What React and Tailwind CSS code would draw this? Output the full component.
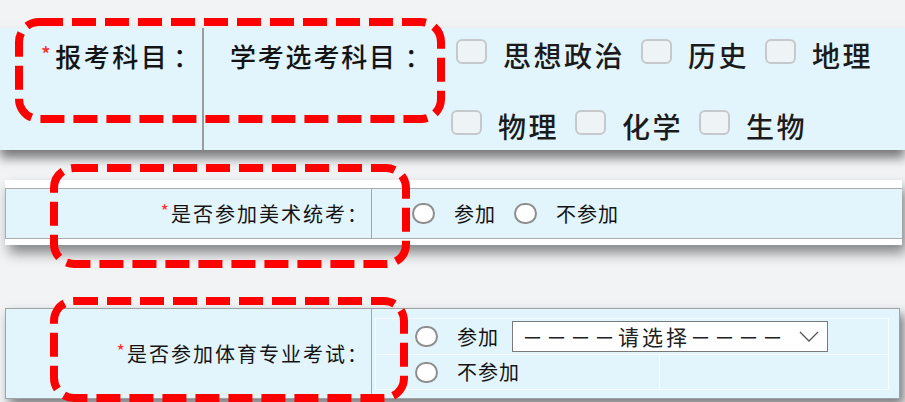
import React from "react";

const subjectsRow1 = ["思想政治", "历史", "地理"];
const subjectsRow2 = ["物理", "化学", "生物"];

function Check({ label }) {
  return (
    <span className="flex items-center">
      <span className="block w-[31px] h-[25px] rounded-[6px] border-2 border-[#c5c9cc] bg-[#eef3f6] -translate-y-[4px]" />
      <span className="ml-[16px] text-[28px] tracking-[2.5px] font-medium text-[#1b1b1b]">{label}</span>
    </span>
  );
}

function Radio({ className = "" }) {
  return <span className={"block w-[23px] h-[21px] rounded-full border-2 border-[#8e8e8e] bg-white shrink-0 " + className} />;
}

function Star({ size = "text-[18px]", top = "-top-[3px]" }) {
  return <span className={"text-[#ff3030] relative " + size + " " + top}>*</span>;
}

export default function App() {
  return (
    <div className="relative w-[905px] h-[402px] overflow-hidden bg-[#f1f3f5] text-[#141414] font-['Noto_Sans_CJK_SC','Noto_Sans',sans-serif]">
      {/* 报考科目 */}
      <div className="mt-[28px] h-[122px] flex bg-[#e3f5fc] shadow-[0_8px_10px_rgba(0,0,0,0.5)]">
        <div className="w-[204px] border-r-2 border-[#9c9c9c] pt-[9px]">
          <div className="h-[36px] flex items-center pl-[41px] text-[26px] tracking-[2.5px] font-medium whitespace-nowrap">
            <Star size="text-[20px]" top="-top-[1px]" />
            <span className="ml-[2px]">报考科目</span>
            <span className="ml-[4px]">：</span>
          </div>
        </div>
        <div className="flex-1 pt-[9px]">
          <div className="h-[36px] flex items-center">
            <span className="pl-[26px] w-[252px] text-[26px] tracking-[1.8px] font-medium whitespace-nowrap">
              学考选考科目<span className="ml-[8px]">：</span>
            </span>
            <div className="flex items-center gap-[16px]">
              {subjectsRow1.map((s) => (
                <Check key={s} label={s} />
              ))}
            </div>
          </div>
          <div className="mt-[35px] h-[36px] flex items-center gap-[16px] pl-[247px]">
            {subjectsRow2.map((s) => (
              <Check key={s} label={s} />
            ))}
          </div>
        </div>
      </div>

      {/* 美术统考 */}
      <div className="mt-[30px] ml-[5px] w-[897px] bg-white pt-[8px] pb-[6px] shadow-[4px_8px_12px_rgba(0,0,0,0.45)]">
        <div className="flex h-[51px] border-y border-l border-[#a9abad] bg-[#e3f5fc]">
          <div className="w-[366px] border-r border-[#a4a4a4] flex items-center justify-end pr-[2px] text-[20px] tracking-[2px] whitespace-nowrap">
            <Star />
            <span>是否参加美术统考：</span>
          </div>
          <div className="flex items-center pl-[40px] text-[20px] tracking-[1px]">
            <Radio />
            <span className="ml-[19px]">参加</span>
            <Radio className="ml-[18px]" />
            <span className="ml-[19px]">不参加</span>
          </div>
        </div>
      </div>

      {/* 体育专业考试 */}
      <div className="mt-[63px] ml-[5px] w-[895px] h-[91px] flex border border-[#9fa3a6] bg-[#e3f5fc] shadow-[4px_6px_10px_rgba(0,0,0,0.5)]">
        <div className="w-[366px] border-r border-[#a4a4a4] flex items-center justify-end pr-[2px] text-[20px] tracking-[2px] whitespace-nowrap">
          <Star />
          <span>是否参加体育专业考试：</span>
        </div>
        <div className="flex-1 pt-[9px] pl-[3px] pr-[10px] text-[20px] tracking-[1px]">
          <div className="border border-[#f6fcff]">
            <div className="h-[36px] flex items-center pl-[39px] border-b border-[#f6fcff]">
              <Radio />
              <span className="ml-[19px]">参加</span>
              <div className="ml-[13px] w-[316px] h-[31px] border border-[#7a7a7a] bg-white flex items-center pl-[9px] pr-[8px] overflow-hidden">
                <span className="flex-1 whitespace-nowrap text-[21px] tracking-[3px] text-[#222]">－－－－请选择－－－－</span>
                <svg className="shrink-0" width="20" height="12" viewBox="0 0 20 12" fill="none">
                  <polyline points="1,1 10,10 19,1" stroke="#555" strokeWidth="1.3" />
                </svg>
              </div>
            </div>
            <div className="h-[34px] flex">
              <div className="w-[284px] border-r border-[#f6fcff] flex items-center pl-[39px]">
                <Radio />
                <span className="ml-[19px]">不参加</span>
              </div>
              <div className="flex-1" />
            </div>
          </div>
        </div>
      </div>

      {/* 标注框 */}
      <svg className="absolute inset-0 pointer-events-none" width="905" height="402" viewBox="0 0 905 402">
        <g fill="none" stroke="#ff0000" strokeWidth="8" strokeDasharray="24 9">
          <rect x="19" y="22" width="422" height="97" rx="20" />
          <rect x="54" y="168" width="352" height="96" rx="20" />
          <rect x="54" y="301" width="350" height="97" rx="20" />
        </g>
      </svg>
    </div>
  );
}
